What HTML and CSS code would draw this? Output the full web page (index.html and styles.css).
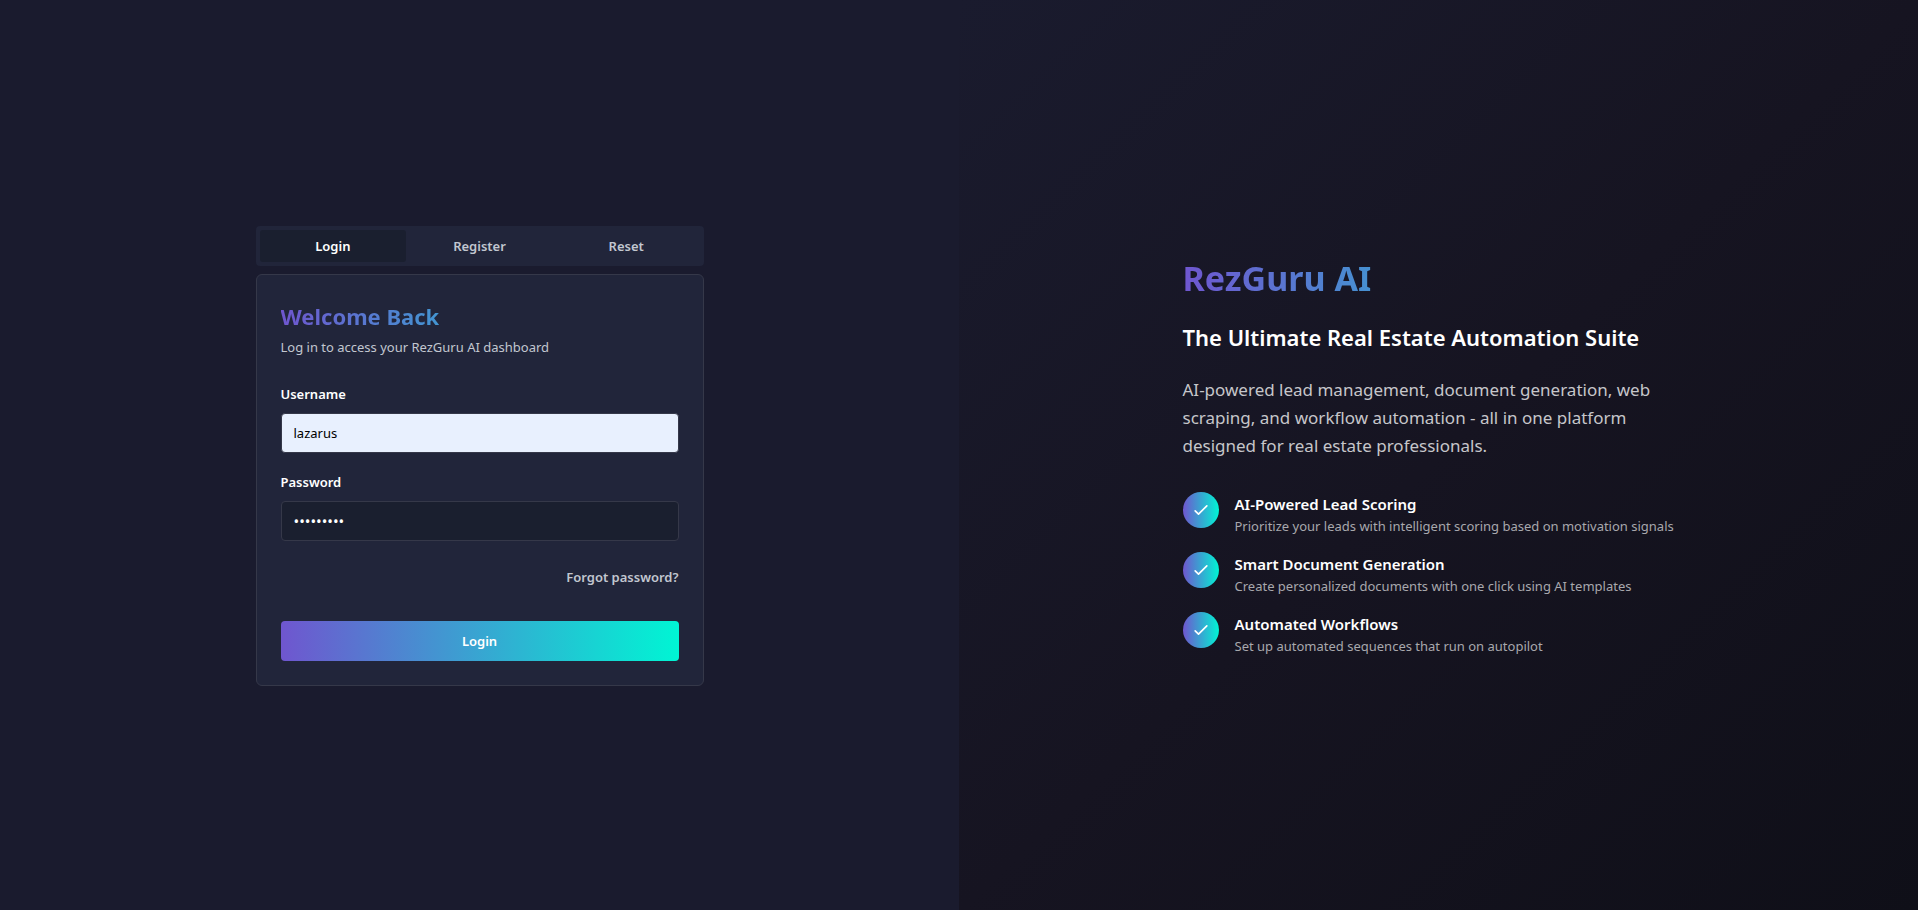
FILE: index.html
```html
<!DOCTYPE html>
<html lang="en">
<head>
<meta charset="utf-8">
<meta name="viewport" content="width=device-width, initial-scale=1">
<title>RezGuru AI</title>
<link rel="stylesheet" href="styles.css">
</head>
<body>
<div class="auth">
  <main class="panel panel-form">
    <div class="form-column">
      <div class="tabs" role="tablist">
        <button class="tab tab-active" type="button" role="tab" aria-selected="true">Login</button>
        <button class="tab" type="button" role="tab" aria-selected="false">Register</button>
        <button class="tab" type="button" role="tab" aria-selected="false">Reset</button>
      </div>
      <form class="card">
        <header class="card-header">
          <h2 class="card-title gradient-text">Welcome Back</h2>
          <p class="card-description">Log in to access your RezGuru AI dashboard</p>
        </header>
        <div class="fields">
          <div class="field">
            <label class="label" for="username">Username</label>
            <input class="input input-filled" id="username" type="text" value="lazarus">
          </div>
          <div class="field">
            <label class="label" for="password">Password</label>
            <input class="input input-password" id="password" type="password" value="lazarus12">
          </div>
          <a class="forgot" href="#">Forgot password?</a>
        </div>
        <button class="submit" type="submit">Login</button>
      </form>
    </div>
  </main>
  <section class="panel panel-hero">
    <div class="hero">
      <h1 class="hero-title gradient-text">RezGuru AI</h1>
      <h2 class="hero-subtitle">The Ultimate Real Estate Automation Suite</h2>
      <p class="hero-text">AI-powered lead management, document generation, web scraping, and workflow automation - all in one platform designed for real estate professionals.</p>
      <ul class="features">
        <li class="feature">
          <span class="badge"><svg class="check" viewBox="0 0 24 24" aria-hidden="true"><path d="M5 13l4 4L19 7"/></svg></span>
          <div>
            <h3 class="feature-title">AI-Powered Lead Scoring</h3>
            <p class="feature-text">Prioritize your leads with intelligent scoring based on motivation signals</p>
          </div>
        </li>
        <li class="feature">
          <span class="badge"><svg class="check" viewBox="0 0 24 24" aria-hidden="true"><path d="M5 13l4 4L19 7"/></svg></span>
          <div>
            <h3 class="feature-title">Smart Document Generation</h3>
            <p class="feature-text">Create personalized documents with one click using AI templates</p>
          </div>
        </li>
        <li class="feature">
          <span class="badge"><svg class="check" viewBox="0 0 24 24" aria-hidden="true"><path d="M5 13l4 4L19 7"/></svg></span>
          <div>
            <h3 class="feature-title">Automated Workflows</h3>
            <p class="feature-text">Set up automated sequences that run on autopilot</p>
          </div>
        </li>
      </ul>
    </div>
  </section>
</div>
</body>
</html>
```

FILE: styles.css
```css
:root {
  --bg: #1a1b2e;
  --surface: #21253a;
  --sunken: #1a1f2f;
  --border: #353849;
  --muted: #c2c7d0;
  --gradient: linear-gradient(90deg, #6f56cf, #00f5d4);
}

* { box-sizing: border-box; }

body {
  margin: 0;
  background: var(--bg);
  color: #fff;
  font-family: "Segoe UI", "Noto Sans", sans-serif;
  font-size: 16px;
  line-height: 24px;
}

h1, h2, h3, p, ul { margin: 0; padding: 0; }

button, input { font-family: inherit; }

.auth {
  display: grid;
  grid-template-columns: 1fr 1fr;
  min-height: 100vh;
}

.panel {
  display: flex;
  align-items: center;
  justify-content: center;
  padding: 34px 32px 32px;
}

.panel-hero { background: linear-gradient(to bottom right, #1a1b2e, #161421 50%, #0f0f18); }

.form-column { width: 100%; max-width: 448px; }

.gradient-text {
  background: var(--gradient);
  background-clip: text;
  -webkit-background-clip: text;
  color: transparent;
}

.tabs {
  display: grid;
  grid-template-columns: repeat(3, 1fr);
  margin-bottom: 8px;
  padding: 4px;
  border-radius: 4px;
  background: var(--surface);
}

.tab {
  height: 32px;
  padding: 0 12px;
  border: 0;
  border-radius: 3px;
  background: transparent;
  color: var(--muted);
  font-size: 13px;
  font-weight: 600;
}

.tab-active { background: var(--sunken); color: #fff; }

.card {
  padding: 24px;
  border: 1px solid var(--border);
  border-radius: 6px;
  background: var(--surface);
}

.card-header {
  display: grid;
  gap: 4px;
  margin-bottom: 24px;
}

.card-title { font-size: 22px; font-weight: 700; line-height: 34px; }

.card-description { color: var(--muted); font-size: 13px; line-height: 20px; }

.fields {
  display: flex;
  flex-direction: column;
  gap: 16px;
  margin-bottom: 24px;
}

.field { display: grid; gap: 6px; }

.label { font-size: 13px; font-weight: 600; line-height: 26px; }

.input {
  width: 100%;
  height: 40px;
  padding: 0 12px;
  border: 1px solid var(--border);
  border-radius: 4px;
  background: var(--sunken);
  color: #fff;
  font-size: 13px;
}

.input-filled { background: #e8f0fe; color: #000; }

.input-password { font-size: 15px; }

.forgot {
  align-self: flex-end;
  color: var(--muted);
  font-size: 13px;
  font-weight: 600;
  line-height: 40px;
  text-decoration: none;
}

.submit {
  width: 100%;
  height: 40px;
  border: 0;
  border-radius: 4px;
  background: var(--gradient);
  color: #fff;
  font-size: 13px;
  font-weight: 600;
}

.hero { width: 100%; max-width: 512px; }

.hero-title {
  margin-bottom: 20px;
  font-size: 34px;
  font-weight: 700;
  line-height: 44px;
}

.hero-subtitle {
  margin-bottom: 22px;
  font-size: 22px;
  font-weight: 600;
  line-height: 34px;
}

.hero-text {
  margin-bottom: 32px;
  color: #c6c6ca;
  font-size: 17px;
  line-height: 28px;
}

.features {
  display: grid;
  gap: 16px;
  list-style: none;
}

.feature { display: flex; gap: 16px; }

.badge {
  display: flex;
  flex: none;
  align-items: center;
  justify-content: center;
  width: 36px;
  height: 36px;
  border-radius: 50%;
  background: var(--gradient);
}

.check {
  width: 20px;
  height: 20px;
  fill: none;
  stroke: #fff;
  stroke-width: 2;
  stroke-linecap: round;
  stroke-linejoin: round;
}

.feature-title { font-size: 15px; font-weight: 600; line-height: 24px; }

.feature-text { color: #a8a8ad; font-size: 13px; line-height: 20px; }
```
